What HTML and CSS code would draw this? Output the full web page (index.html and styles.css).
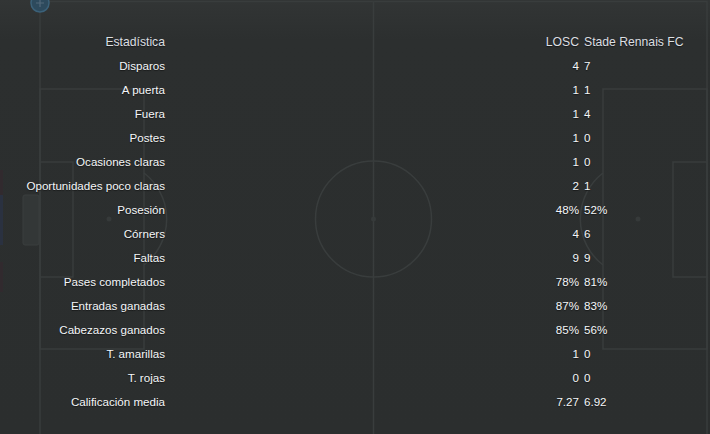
FILE: index.html
```html
<!DOCTYPE html>
<html lang="es">
<head>
  <meta charset="UTF-8">
  <title>Estadísticas del partido</title>
  <link rel="stylesheet" href="styles.css">
</head>
<body>
  <div class="panel">
    <!-- pitch drawn behind the table -->
    <svg class="pitch" viewBox="0 0 710 434" width="710" height="434">
      <rect x="0" y="170" width="3" height="25" fill="#312a2e"/>
      <rect x="0" y="195" width="3" height="50" fill="#2a3140"/>
      <rect x="0" y="262" width="3" height="30" fill="#312a2e"/>
      <g fill="none" stroke="#393d3d" stroke-width="1.5">
        <rect x="40" y="1.5" width="667" height="436"/>
        <line x1="373.5" y1="1.5" x2="373.5" y2="440"/>
        <circle cx="373.5" cy="219" r="58"/>
        <rect x="40" y="89" width="104" height="260"/>
        <rect x="603" y="89" width="104" height="260"/>
        <rect x="40" y="162" width="33" height="115"/>
        <rect x="673" y="162" width="34" height="115"/>
        <path d="M144 173 A58 58 0 0 1 144 265"/>
        <path d="M603 173 A58 58 0 0 0 603 265"/>
      </g>
      <g fill="#363a3a">
        <circle cx="373.5" cy="219" r="2.5"/>
        <circle cx="109" cy="219" r="2.5"/>
        <circle cx="638" cy="219" r="2.5"/>
      </g>
      <rect x="23" y="195" width="16" height="50" rx="2" fill="#333737" stroke="#3a3e3e"/>
      <circle cx="40" cy="3" r="9" fill="#2d4a5d" stroke="#3b6179" stroke-width="1.5"/>
      <path d="M36 3 H44 M40 -1 V7" stroke="#52687a" stroke-width="1.2"/>
    </svg>

    <div class="stats">
      <div class="row head"><span class="label">Estadística</span><span class="home">LOSC</span><span class="away">Stade Rennais FC</span></div>
      <div class="row"><span class="label">Disparos</span><span class="home">4</span><span class="away">7</span></div>
      <div class="row"><span class="label">A puerta</span><span class="home">1</span><span class="away">1</span></div>
      <div class="row"><span class="label">Fuera</span><span class="home">1</span><span class="away">4</span></div>
      <div class="row"><span class="label">Postes</span><span class="home">1</span><span class="away">0</span></div>
      <div class="row"><span class="label">Ocasiones claras</span><span class="home">1</span><span class="away">0</span></div>
      <div class="row"><span class="label">Oportunidades poco claras</span><span class="home">2</span><span class="away">1</span></div>
      <div class="row"><span class="label">Posesión</span><span class="home">48%</span><span class="away">52%</span></div>
      <div class="row"><span class="label">Córners</span><span class="home">4</span><span class="away">6</span></div>
      <div class="row"><span class="label">Faltas</span><span class="home">9</span><span class="away">9</span></div>
      <div class="row"><span class="label">Pases completados</span><span class="home">78%</span><span class="away">81%</span></div>
      <div class="row"><span class="label">Entradas ganadas</span><span class="home">87%</span><span class="away">83%</span></div>
      <div class="row"><span class="label">Cabezazos ganados</span><span class="home">85%</span><span class="away">56%</span></div>
      <div class="row"><span class="label">T. amarillas</span><span class="home">1</span><span class="away">0</span></div>
      <div class="row"><span class="label">T. rojas</span><span class="home">0</span><span class="away">0</span></div>
      <div class="row"><span class="label">Calificación media</span><span class="home">7.27</span><span class="away">6.92</span></div>
    </div>
  </div>
</body>
</html>
```

FILE: styles.css
```css
html, body {
  margin: 0;
  padding: 0;
  background: #2b2e2e;
}
.panel {
  position: relative;
  width: 710px;
  height: 434px;
  overflow: hidden;
  background: linear-gradient(to bottom, #323535 0, #2c2f2f 40px, #2b2e2e 100%);
  font-family: "Liberation Sans", Arial, sans-serif;
  font-size: 11.6px;
  color: #f4f6f8;
}
.pitch {
  position: absolute;
  top: 0;
  left: 0;
}
.stats {
  position: relative;
  padding-top: 30px;
}
.row {
  display: grid;
  grid-template-columns: 165px 414px 1fr;
  height: 24px;
  line-height: 24px;
  text-shadow: 0 1px 1px rgba(0, 0, 0, 0.5);
}
.label {
  text-align: right;
}
.home {
  text-align: right;
}
.away {
  padding-left: 5px;
}
.head {
  font-size: 12.2px;
  color: #dcdfe2;
}
```
